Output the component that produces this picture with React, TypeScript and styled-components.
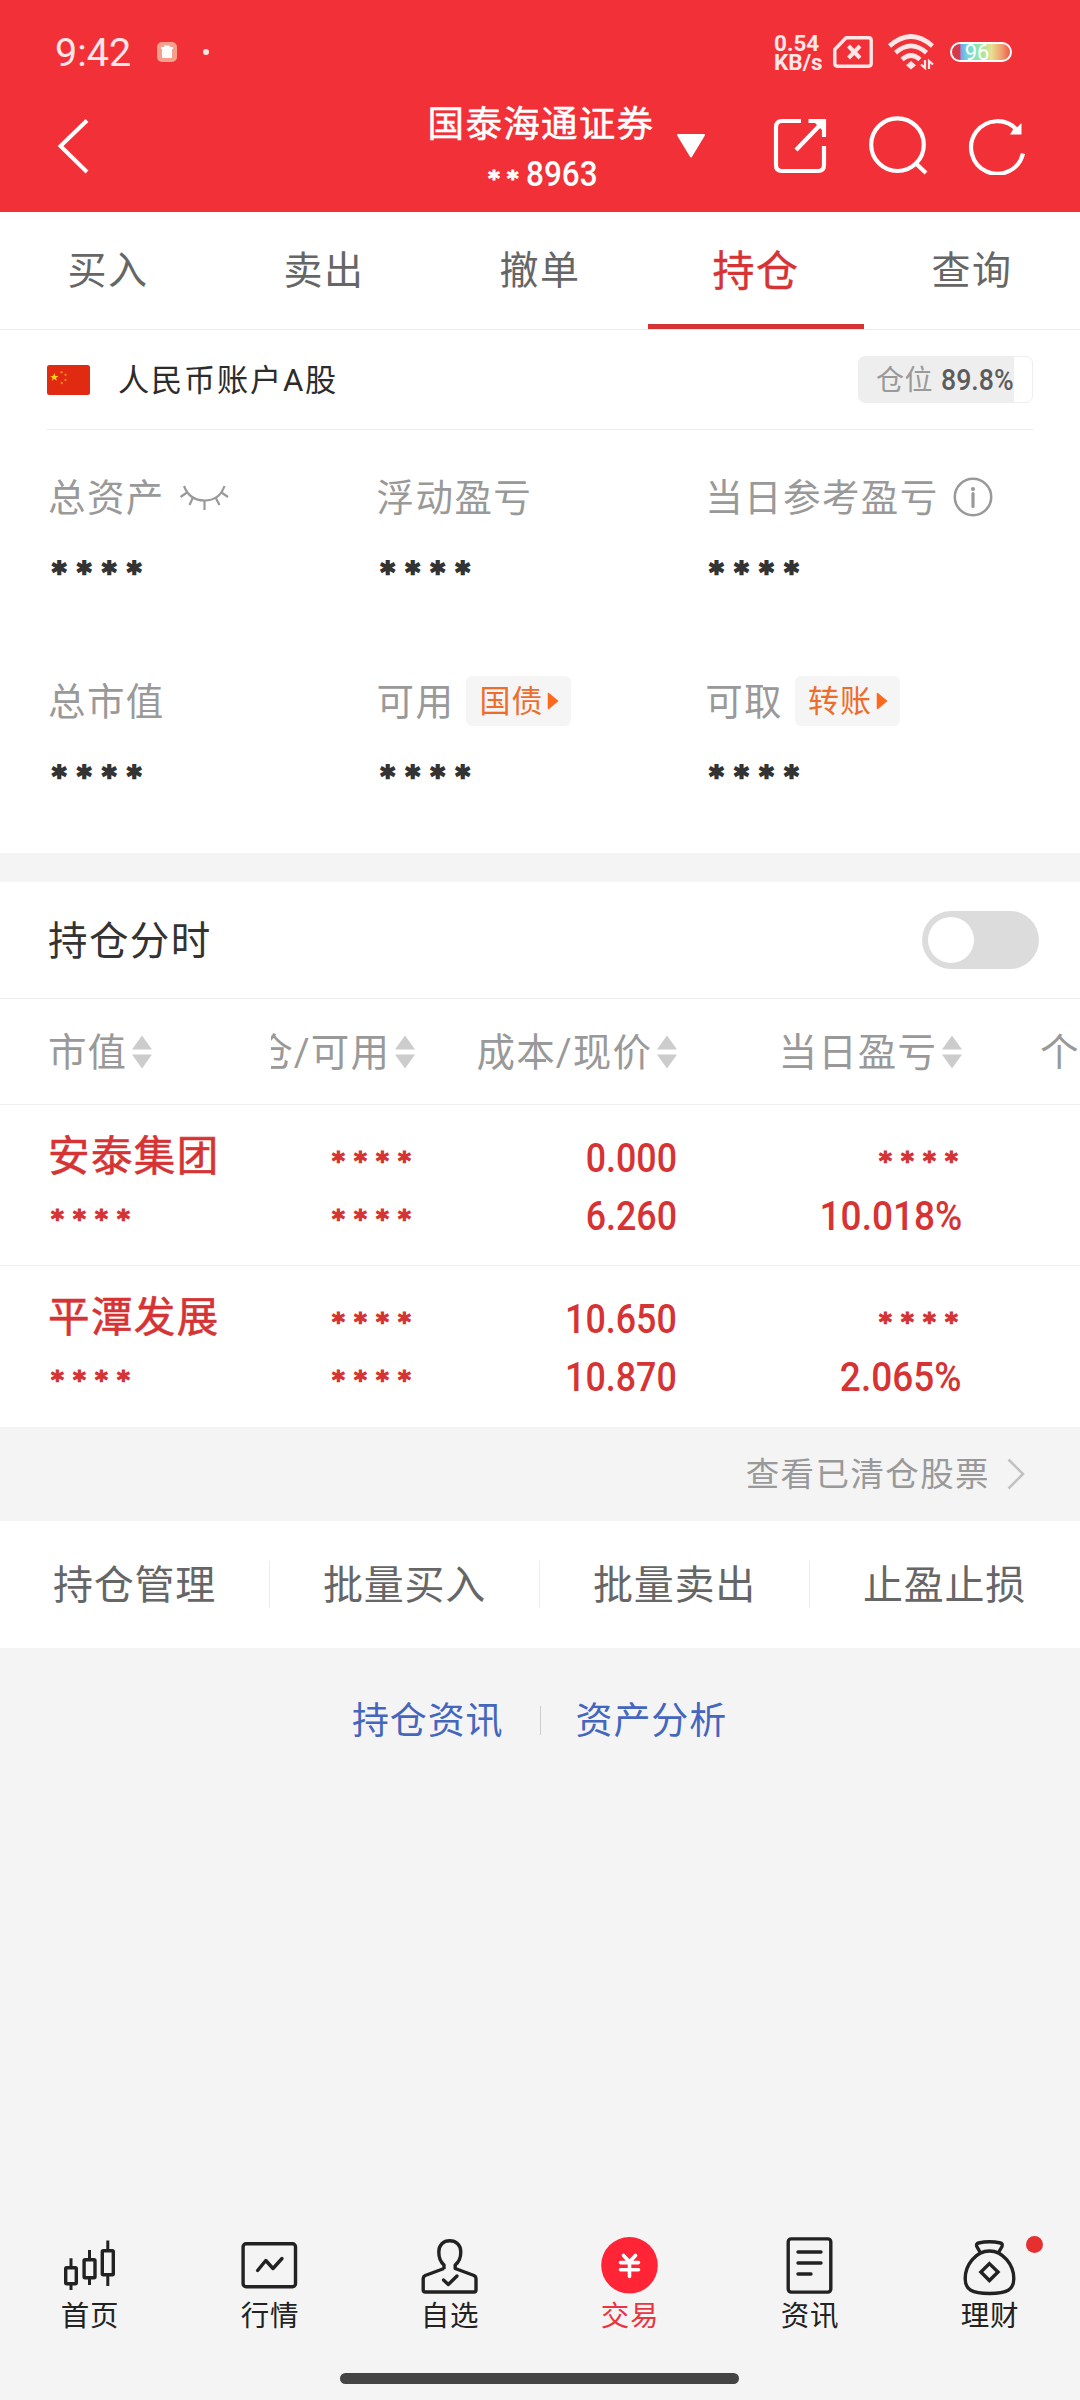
import React from 'react';
import styled, { createGlobalStyle } from 'styled-components';

const RED = '#d63334';

const GlobalStyle = createGlobalStyle`
  * { box-sizing: border-box; }
  body {
    margin: 0;
    background: #f4f4f4;
    font-family: Roboto, "Noto Sans CJK SC", sans-serif;
    -webkit-font-smoothing: antialiased;
  }
  svg { display: block; flex: none; }
`;

const Page = styled.div`
  width: 1080px;
  height: 2400px;
  overflow: hidden;
  display: flex;
  flex-direction: column;
  background: #f4f4f4;
`;

/* Optically centres Chinese text, whose glyphs sit low in the line box. */
const Caption = styled.span`
  margin-bottom: 6px;
`;

/* ---------- header ---------- */

const Header = styled.header`
  height: 212px;
  flex: none;
  background: #f23038;
  color: #fff;
`;

const StatusBar = styled.div`
  height: 80px;
  padding: 24px 68px 0 55px;
  display: flex;
  align-items: center;
`;

const Clock = styled.span`
  width: 102px;
  padding-top: 2px;
  font-size: 39.5px;
  line-height: 56px;
  color: #ffe6e7;
`;

const StatusDot = styled.span`
  width: 6px;
  height: 6px;
  margin-left: 26px;
  border-radius: 50%;
  background: #ffe6e7;
`;

const NetSpeed = styled.span`
  width: 50px;
  margin: 2px 9px 0 auto;
  display: flex;
  flex-direction: column;
  font-size: 22.5px;
  font-weight: 700;
  line-height: 19px;
  color: #ffe6e7;
`;

const SignalIcons = styled.span`
  display: flex;
  align-items: center;
  gap: 15px;
`;

const Battery = styled.span`
  width: 62px;
  height: 20px;
  margin-left: 16px;
  border: 2px solid #fff;
  border-radius: 10px;
  display: flex;
  justify-content: center;
  align-items: center;
  padding: 2px 8px 0 0;
  color: #fff;
  font-size: 22px;
  line-height: 16px;
  background: linear-gradient(90deg, #d63a48 0 14%, #7d9cf0 15%, #6fd6e0 26%, #8ee8a4 45%, #e8df90 68%, #f0a070 85%, #f0584c 100%);
`;

const TitleBar = styled.div`
  height: 132px;
  display: flex;
  align-items: center;
  padding: 0 53px 0 54px;
`;

const TitleBlock = styled.div`
  width: 230px;
  margin-left: 336px;
  padding-top: 7px;
  display: flex;
  flex-direction: column;
  align-items: center;
`;

const Title = styled.h1`
  margin: 0;
  font-size: 36.5px;
  font-weight: 400;
  line-height: 50px;
  letter-spacing: 1.3px;
  white-space: nowrap;
  -webkit-text-stroke: 0.5px #fff;
`;

const Subtitle = styled.div`
  display: flex;
  align-items: center;
  font-size: 35px;
  font-weight: 500;
  line-height: 50px;
`;

const SubtitleMask = styled.span`
  margin: 0 0 0 3px;
  padding-top: 9px;
  font-family: "DejaVu Sans", sans-serif;
  font-size: 22px;
  font-weight: 700;
  letter-spacing: 7.3px;
  line-height: 30px;
  -webkit-text-stroke: 1px #fff;
`;

const AccountTail = styled.span`
  width: 71px;
  transform: scaleX(0.9);
  transform-origin: left center;
`;

const TitleCaret = styled.span`
  width: 30px;
  margin-left: 20px;
`;

const HeaderActions = styled.div`
  display: flex;
  margin: 0 0 2px auto;
  gap: 39px;
`;

/* ---------- tabs ---------- */

const Tabs = styled.nav`
  height: 118px;
  flex: none;
  display: grid;
  grid-template-columns: repeat(5, 1fr);
  background: #fff;
  border-bottom: 1px solid #ebebeb;
`;

const Tab = styled.span<{ $active?: boolean }>`
  display: flex;
  align-items: center;
  justify-content: center;
  padding-bottom: ${p => (p.$active ? 2 : 7)}px;
  font-size: ${p => (p.$active ? 42 : 39)}px;
  letter-spacing: 1.4px;
  color: ${p => (p.$active ? RED : '#666')};
  border-bottom: ${p => (p.$active ? `5px solid ${RED}` : 'none')};
  -webkit-text-stroke: ${p => (p.$active ? `0.4px ${RED}` : '0')};
`;

/* ---------- account summary ---------- */

const Account = styled.section`
  height: 523px;
  flex: none;
  padding: 0 47px;
  background: #fff;
`;

const AccountHead = styled.div`
  height: 100px;
  display: flex;
  align-items: center;
  border-bottom: 1px solid #ebebeb;
`;

const AccountName = styled.span`
  margin: 0 0 5px 28px;
  font-size: 31.2px;
  letter-spacing: 1.8px;
  color: #2c2c2c;
`;

const PositionBadge = styled.span<{ $percent: number }>`
  width: 175px;
  height: 47px;
  margin-left: auto;
  padding: 0 0 3px 17px;
  display: flex;
  align-items: center;
  border: 1px solid #eee;
  border-radius: 7px;
  background: linear-gradient(90deg, #eee ${p => p.$percent}%, #fff ${p => p.$percent}%);
  color: #999;
  font-size: 28px;
  letter-spacing: 0.6px;
  white-space: nowrap;
`;

const PositionValue = styled.b`
  margin-left: 8px;
  padding-top: 4px;
  font-size: 29px;
  font-weight: 500;
  letter-spacing: 0;
  color: #5c5c5c;
  transform: scaleX(0.92);
  transform-origin: left center;
`;

const MetricGrid = styled.div`
  display: grid;
  grid-template-columns: repeat(3, 328.6px);
  grid-auto-rows: 204px;
  padding-top: 37px;
`;

const MetricLabel = styled.div`
  height: 60px;
  display: flex;
  align-items: center;
  padding-left: 1px;
  font-size: 37.5px;
  letter-spacing: 1.4px;
  color: #999;
  white-space: nowrap;

  & > svg { margin-left: 14px; }
`;

const Chip = styled.span`
  width: 105px;
  height: 50px;
  margin-left: 12px;
  padding-left: 13px;
  display: flex;
  align-items: center;
  border-radius: 6px;
  background: #f5f5f5;
  color: #ee6d2b;
  font-size: 31px;
  letter-spacing: 1px;

  svg { margin-left: 4px; }
`;

const ChipText = styled.span`
  margin-bottom: 5px;
`;

const MaskedValue = styled.div`
  height: 60px;
  margin-top: 15px;
  padding-left: 5px;
  font: 700 27.5px/60px "DejaVu Sans", sans-serif;
  letter-spacing: 10.6px;
  color: #333;
  -webkit-text-stroke: 1.8px #333;
`;

/* ---------- holdings ---------- */

const Holdings = styled.section`
  margin-top: 29px;
  flex: none;
  background: #fff;
`;

const ChartToggleRow = styled.div`
  height: 117px;
  padding: 0 41px 0 48px;
  display: flex;
  align-items: center;
  justify-content: space-between;
  border-bottom: 1px solid #ebebeb;
  font-size: 39.5px;
  letter-spacing: 1.4px;
  color: #333;
`;

const Switch = styled.span`
  width: 117px;
  height: 58px;
  padding: 6px;
  border-radius: 29px;
  background: #dcdcdc;
`;

const SwitchKnob = styled.span`
  display: block;
  width: 46px;
  height: 46px;
  border-radius: 50%;
  background: #fff;
`;

const Row = styled.div<{ $height: number; $line?: boolean }>`
  height: ${p => p.$height}px;
  display: grid;
  grid-template-columns: 271px 809px;
  border-bottom: ${p => (p.$line ? '1px solid #efefef' : 'none')};
`;

const FixedCell = styled.div`
  padding-left: 48px;
  min-width: 0;
`;

const ScrollArea = styled.div`
  display: grid;
  grid-template-columns: 144px 262px 285px 118px;
  overflow: hidden;
`;

const HeadCell = styled.div<{ $end?: boolean; $indent?: number }>`
  height: 105px;
  display: flex;
  align-items: center;
  justify-content: ${p => (p.$end ? 'flex-end' : 'flex-start')};
  padding-left: ${p => p.$indent ?? 0}px;
  color: #999;
  font-size: 38.5px;
  letter-spacing: 1.1px;
  white-space: nowrap;

  svg { margin: 1px 0 0 5px; }
`;

const Cell = styled.div`
  padding-top: 22px;
  display: flex;
  flex-direction: column;
  align-items: flex-end;
  color: ${RED};
`;

const Figure = styled.span<{ $percent?: boolean }>`
  height: 58px;
  font-size: 40px;
  font-weight: 500;
  line-height: 64px;
  transform: scaleX(${p => (p.$percent ? 0.925 : 0.895)});
  transform-origin: right center;
`;

const MaskedFigure = styled.span`
  height: 58px;
  margin-right: -5px;
  padding-top: 5px;
  font: 700 24.5px/58px "DejaVu Sans", sans-serif;
  letter-spacing: 9.2px;
  color: ${RED};
  -webkit-text-stroke: 1.2px ${RED};
`;

const StockName = styled.div`
  height: 80px;
  padding-top: 22px;
  font-size: 41.5px;
  line-height: 60px;
  letter-spacing: 1.4px;
  color: ${RED};
  -webkit-text-stroke: 0.6px ${RED};
`;

const StockMask = styled(MaskedFigure)`
  display: block;
  margin-left: 3px;
`;

/* ---------- shortcuts ---------- */

const ClearedLink = styled.div`
  height: 94px;
  flex: none;
  padding-right: 55px;
  display: flex;
  align-items: center;
  justify-content: flex-end;
  gap: 17px;
  font-size: 33.5px;
  letter-spacing: 1.4px;
  color: #999;
`;

const ActionBar = styled.div`
  height: 127px;
  flex: none;
  display: grid;
  grid-template-columns: repeat(4, 270px);
  align-items: center;
  background: #fff;
`;

const Action = styled.span`
  height: 47px;
  display: flex;
  align-items: center;
  justify-content: center;
  padding: 0 1px 6px 0;
  font-size: 40px;
  letter-spacing: 0.8px;
  color: #666;
  background: linear-gradient(#ececec, #ececec) right center / 1px 47px no-repeat;

  &:last-child { background: none; }
`;

const InfoLinks = styled.div`
  height: 145px;
  flex: none;
  display: flex;
  align-items: center;
  justify-content: center;
  color: #4466bd;
  font-size: 37px;
  letter-spacing: 0.9px;
`;

const InfoLink = styled.span`
  padding: 0 36px 6px 36px;

  & + & {
    padding-right: 37px;
    background: linear-gradient(#cdcdcd, #cdcdcd) left center / 1px 29px no-repeat;
  }
`;

/* ---------- bottom navigation ---------- */

const BottomNav = styled.nav`
  height: 165px;
  margin-top: auto;
  flex: none;
  display: flex;
  flex-direction: column;
  align-items: center;
`;

const NavItems = styled.div`
  height: 138px;
  display: grid;
  grid-template-columns: repeat(6, 180px);
`;

const NavItem = styled.div<{ $active?: boolean }>`
  position: relative;
  display: flex;
  flex-direction: column;
  align-items: center;
  gap: 1px;
  font-size: 28.5px;
  line-height: 40px;
  letter-spacing: 0.8px;
  color: ${p => (p.$active ? '#ea3442' : '#222')};
`;

const UnreadDot = styled.i`
  position: absolute;
  top: 1px;
  left: 126px;
  width: 17px;
  height: 17px;
  border-radius: 50%;
  background: #e63030;
`;

const HomeIndicator = styled.span`
  width: 399px;
  height: 11px;
  margin-right: 1px;
  border-radius: 6px;
  background: #444;
`;

/* ---------- icons ---------- */

const TrashBadge = () => (
  <svg width="20" height="20" viewBox="0 0 20 20">
    <rect width="20" height="20" rx="5" fill="#f69f8d" />
    <path d="M7 3.6h6v1.3h3V7H4V4.900h3z" fill="#fff" />
    <rect x="5" y="6.500" width="10" height="9.500" rx="1" fill="#fff" />
  </svg>
);

const SimIcon = () => (
  <svg width="40" height="32" viewBox="0 0 40 32" fill="none" stroke="#ffe6e7">
    <path d="M13 1.800H35.500Q38.200 1.800 38.200 4.500V27.500Q38.200 30.200 35.500 30.200H4.500Q1.800 30.200 1.800 27.500V13.500Z" strokeWidth="3.400" strokeLinejoin="round" />
    <path d="M15.500 10l11.500 12M27 10L15.500 22" strokeWidth="4" />
  </svg>
);

const WifiIcon = () => (
  <svg width="46" height="36" viewBox="0 0 46 36" fill="none" stroke="#ffe6e7" strokeWidth="4.600">
    <path d="M1.500 12Q23-7 44.500 12" />
    <path d="M7.500 18.800Q23 5 38.500 18.800" />
    <path d="M14 25.500Q23 17.500 32 25.500" />
    <path d="M23 27l5 4.200-5 4.300-5-4.300z" fill="#ffe6e7" stroke="none" />
    <path d="M37 26v8l-4-3.500M41 35v-8l4 3.500" strokeWidth="2.200" />
  </svg>
);

const BackIcon = () => (
  <svg width="36" height="60" viewBox="0 0 36 60" fill="none" stroke="#fff" strokeWidth="4">
    <path d="M33 4.500L6.500 30L33 56" />
  </svg>
);

const CaretIcon = () => (
  <svg width="30" height="26" viewBox="0 0 30 26">
    <path d="M2 2H28L15 23.500Z" fill="#fff" stroke="#fff" strokeWidth="2" strokeLinejoin="round" />
  </svg>
);

const ShareIcon = () => (
  <svg width="60" height="60" viewBox="0 0 60 60" fill="none" stroke="#fff" strokeWidth="4.200">
    <path d="M32 6H13Q7 6 7 12V50Q7 56 13 56H49Q55 56 55 50V31" />
    <path d="M39.500 6H55V22" />
    <path d="M27 35L53 8" />
    <path d="M46 8H55V17Z" fill="#fff" stroke="none" />
  </svg>
);

const SearchIcon = () => (
  <svg width="60" height="60" viewBox="0 0 60 60" fill="none" stroke="#fff" strokeWidth="4.200">
    <circle cx="29.500" cy="29.700" r="26.300" />
    <path d="M48 48.500L58 58" />
  </svg>
);

const RefreshIcon = () => (
  <svg width="60" height="60" viewBox="0 0 60 60" fill="none" stroke="#fff" strokeWidth="4.200">
    <path d="M56 38.500A26.300 26.300 0 1 1 50 15" />
    <path d="M54.500 8V19.500H43L46 14.500L49.500 13Z" fill="#fff" stroke="none" />
  </svg>
);

const FlagIcon = () => (
  <svg width="43" height="30" viewBox="0 0 43 30">
    <rect width="43" height="30" rx="2.500" fill="#e02a12" />
    <path d="M7.300 8l1.100 2.900 3 .1-2.400 1.900.9 2.900-2.600-1.700-2.600 1.700.9-2.900L3.200 11l3-.1z" fill="#ffcb1f" />
    <g fill="#f27a1c">
      <circle cx="14.500" cy="7.200" r="1.200" />
      <circle cx="18.500" cy="9.800" r="1.200" />
      <circle cx="18.500" cy="15" r="1.200" />
      <circle cx="14.800" cy="18" r="1.200" />
    </g>
  </svg>
);

const ClosedEyeIcon = () => (
  <svg width="50" height="28" viewBox="0 0 50 28" fill="none" stroke="#999" strokeWidth="2.200">
    <path d="M5 3Q10.500 17.500 25.500 17.500T45.500 3" />
    <path d="M8 9.500L1.500 14M14 14.500L10.500 22M25.500 17.500V27M36.500 14.500L40.500 22M42.500 9.500L49 14" />
  </svg>
);

const InfoIcon = () => (
  <svg width="40" height="40" viewBox="0 0 40 40" fill="none" stroke="#999">
    <circle cx="20" cy="20" r="18.200" strokeWidth="2.500" />
    <path d="M20 16.500V29.500" strokeWidth="3.200" strokeLinecap="round" />
    <circle cx="20" cy="12" r="2.100" fill="#999" stroke="none" />
  </svg>
);

const ChipArrow = () => (
  <svg width="12" height="18" viewBox="0 0 12 18">
    <path d="M1.500 1.500L10.500 9 1.500 16.500Z" fill="#ff691c" stroke="#ff691c" strokeWidth="1.500" strokeLinejoin="round" />
  </svg>
);

const SortIcon = () => (
  <svg width="20" height="34" viewBox="0 0 20 34" fill="#ccc">
    <path d="M10 0.500L20 14.500H0ZM0 19.500H20L10 33.500Z" />
  </svg>
);

const ChevronIcon = () => (
  <svg width="18" height="32" viewBox="0 0 18 32" fill="none" stroke="#c2c2c2" strokeWidth="2.600">
    <path d="M1.500 1.500L16 16 1.500 30.500" />
  </svg>
);

const NavSvg = ({ children }: { children: React.ReactNode }) => (
  <svg width="60" height="61" viewBox="0 0 60 61" fill="none" stroke="#222" strokeWidth="3.400" strokeLinejoin="round">
    {children}
  </svg>
);

const HomeIcon = () => (
  <NavSvg>
    <rect x="5.700" y="32.700" width="10.600" height="16" rx="1" />
    <rect x="24.100" y="24.700" width="10.900" height="18" rx="1" />
    <rect x="42.300" y="15.700" width="11" height="24" rx="1" />
    <path d="M11 23.300V32M11 49.500V55M29.500 15V24M29.500 43.500V50M47.800 5.500V15M47.800 40.500V51" strokeWidth="3" />
  </NavSvg>
);

const MarketIcon = () => (
  <NavSvg>
    <rect x="3.100" y="8.800" width="52.400" height="43" rx="3" />
    <path d="M17.600 35.500L25.800 25.500L33 33.500L42 23.500" strokeLinecap="round" />
  </NavSvg>
);

const WatchlistIcon = () => (
  <NavSvg>
    <path d="M24 34V30C20.500 27 18.800 23.500 18.800 17C18.800 10 23.300 5.800 29.700 5.800S40.800 10 40.800 17C40.800 23.500 39 27 35.200 30V33.500L54 40.500Q56 41.500 56 43.500V55Q56 57 54 57H5.200Q3.200 57 3.200 55V43.500Q3.200 41.500 5.200 40.500L24 33.500" />
    <path d="M23.500 45L28.300 49.500L37 41" strokeLinecap="round" />
  </NavSvg>
);

const TradeIcon = () => (
  <NavSvg>
    <circle cx="29.500" cy="30.300" r="28.300" fill="#ff2537" stroke="none" />
    <path d="M23.500 20.500L29.500 27L35.500 20.500M29.500 27.500V41.500M20.500 27.600H38.500M20.500 34.700H38.500" stroke="#fff" strokeWidth="3.600" strokeLinecap="round" />
  </NavSvg>
);

const NewsIcon = () => (
  <NavSvg>
    <rect x="8.200" y="3.900" width="42.600" height="53.200" rx="3" />
    <path d="M18 17H41M18 28H41M18 39H31" strokeLinecap="round" />
  </NavSvg>
);

const WealthIcon = () => (
  <NavSvg>
    <path d="M20 17L16.800 11.500Q15.800 8.700 18.500 8Q29.500 5.500 40.500 8Q43 8.700 42 11.500L38.800 17" />
    <path d="M29.500 16C16 16 5.200 30 5.200 43.500C5.200 55 12 58.500 29.500 58.500S53.800 55 53.800 43.500C53.800 30 43 16 29.500 16Z" />
    <path d="M29.400 28.600L38 37L29.400 45.500L20.900 37Z" strokeLinejoin="miter" />
  </NavSvg>
);

/* ---------- data ---------- */

const MASK = '****';

const holdings = [
  { name: '安泰集团', cost: '0.000', price: '6.260', change: '10.018%' },
  { name: '平潭发展', cost: '10.650', price: '10.870', change: '2.065%' },
];

const metrics: { label: string; extra?: React.ReactNode }[] = [
  { label: '总资产', extra: <ClosedEyeIcon /> },
  { label: '浮动盈亏' },
  { label: '当日参考盈亏', extra: <InfoIcon /> },
  { label: '总市值' },
  { label: '可用', extra: <Chip><ChipText>国债</ChipText><ChipArrow /></Chip> },
  { label: '可取', extra: <Chip><ChipText>转账</ChipText><ChipArrow /></Chip> },
];

const navItems = [
  { label: '首页', icon: <HomeIcon /> },
  { label: '行情', icon: <MarketIcon /> },
  { label: '自选', icon: <WatchlistIcon /> },
  { label: '交易', icon: <TradeIcon />, active: true },
  { label: '资讯', icon: <NewsIcon /> },
  { label: '理财', icon: <WealthIcon />, unread: true },
];

export default function App() {
  return (
    <Page>
      <GlobalStyle />
      <Header>
        <StatusBar>
          <Clock>9:42</Clock>
          <TrashBadge />
          <StatusDot />
          <NetSpeed>
            <span>0.54</span>
            <span>KB/s</span>
          </NetSpeed>
          <SignalIcons>
            <SimIcon />
            <WifiIcon />
          </SignalIcons>
          <Battery>96</Battery>
        </StatusBar>
        <TitleBar>
          <BackIcon />
          <TitleBlock>
            <Title>国泰海通证券</Title>
            <Subtitle>
              <SubtitleMask>**</SubtitleMask>
              <AccountTail>8963</AccountTail>
            </Subtitle>
          </TitleBlock>
          <TitleCaret><CaretIcon /></TitleCaret>
          <HeaderActions>
            <ShareIcon />
            <SearchIcon />
            <RefreshIcon />
          </HeaderActions>
        </TitleBar>
      </Header>

      <Tabs>
        {['买入', '卖出', '撤单', '持仓', '查询'].map(t => (
          <Tab key={t} $active={t === '持仓'}>{t}</Tab>
        ))}
      </Tabs>

      <Account>
        <AccountHead>
          <FlagIcon />
          <AccountName>人民币账户A股</AccountName>
          <PositionBadge $percent={89.8}>
            仓位<PositionValue>89.8%</PositionValue>
          </PositionBadge>
        </AccountHead>
        <MetricGrid>
          {metrics.map(m => (
            <div key={m.label}>
              <MetricLabel><Caption>{m.label}</Caption>{m.extra}</MetricLabel>
              <MaskedValue>{MASK}</MaskedValue>
            </div>
          ))}
        </MetricGrid>
      </Account>

      <Holdings>
        <ChartToggleRow>
          <Caption>持仓分时</Caption>
          <Switch><SwitchKnob /></Switch>
        </ChartToggleRow>
        <Row $height={106} $line>
          <FixedCell><HeadCell><Caption>市值</Caption><SortIcon /></HeadCell></FixedCell>
          <ScrollArea>
            <HeadCell $end><Caption>仓/可用</Caption><SortIcon /></HeadCell>
            <HeadCell $end><Caption>成本/现价</Caption><SortIcon /></HeadCell>
            <HeadCell $end><Caption>当日盈亏</Caption><SortIcon /></HeadCell>
            <HeadCell $indent={78}><Caption>个</Caption></HeadCell>
          </ScrollArea>
        </Row>
        {holdings.map((h, i) => (
          <Row key={h.name} $height={161} $line={i === 0}>
            <FixedCell>
              <StockName>{h.name}</StockName>
              <StockMask>{MASK}</StockMask>
            </FixedCell>
            <ScrollArea>
              <Cell>
                <MaskedFigure>{MASK}</MaskedFigure>
                <MaskedFigure>{MASK}</MaskedFigure>
              </Cell>
              <Cell>
                <Figure>{h.cost}</Figure>
                <Figure>{h.price}</Figure>
              </Cell>
              <Cell>
                <MaskedFigure>{MASK}</MaskedFigure>
                <Figure $percent>{h.change}</Figure>
              </Cell>
            </ScrollArea>
          </Row>
        ))}
      </Holdings>

      <ClearedLink><Caption>查看已清仓股票</Caption><ChevronIcon /></ClearedLink>

      <ActionBar>
        {['持仓管理', '批量买入', '批量卖出', '止盈止损'].map(a => (
          <Action key={a}>{a}</Action>
        ))}
      </ActionBar>

      <InfoLinks>
        <InfoLink>持仓资讯</InfoLink>
        <InfoLink>资产分析</InfoLink>
      </InfoLinks>

      <BottomNav>
        <NavItems>
          {navItems.map(n => (
            <NavItem key={n.label} $active={n.active}>
              {n.icon}
              {n.label}
              {n.unread && <UnreadDot />}
            </NavItem>
          ))}
        </NavItems>
        <HomeIndicator />
      </BottomNav>
    </Page>
  );
}
